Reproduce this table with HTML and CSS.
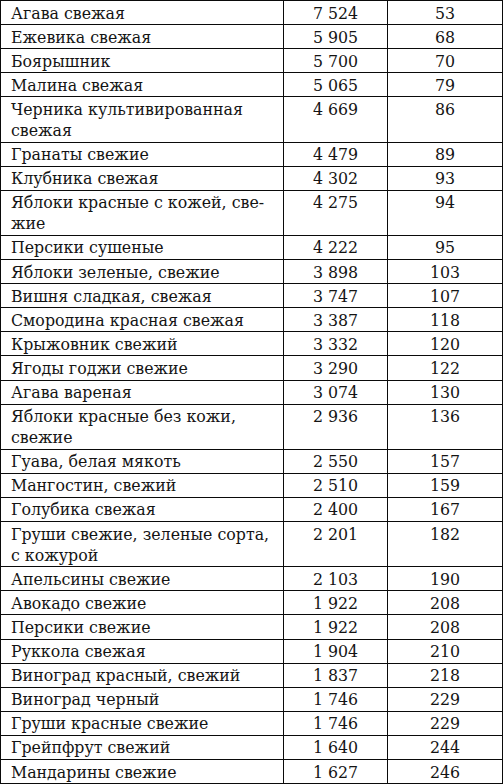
FILE: index.html
```html
<!DOCTYPE html>
<html lang="ru">
<head>
<meta charset="utf-8">
<link rel="stylesheet" href="styles.css">
</head>
<body>
<table class="tbl">
<colgroup><col class="c1"><col class="c2"><col class="c3"></colgroup>
<tbody>
<tr><td>Агава свежая</td><td>7 524</td><td>53</td></tr>
<tr><td>Ежевика свежая</td><td>5 905</td><td>68</td></tr>
<tr><td>Боярышник</td><td>5 700</td><td>70</td></tr>
<tr><td>Малина свежая</td><td>5 065</td><td>79</td></tr>
<tr><td>Черника культивированная<br>свежая</td><td>4 669</td><td>86</td></tr>
<tr><td>Гранаты свежие</td><td>4 479</td><td>89</td></tr>
<tr><td>Клубника свежая</td><td>4 302</td><td>93</td></tr>
<tr><td>Яблоки красные с кожей, све-<br>жие</td><td>4 275</td><td>94</td></tr>
<tr><td>Персики сушеные</td><td>4 222</td><td>95</td></tr>
<tr><td>Яблоки зеленые, свежие</td><td>3 898</td><td>103</td></tr>
<tr><td>Вишня сладкая, свежая</td><td>3 747</td><td>107</td></tr>
<tr><td>Смородина красная свежая</td><td>3 387</td><td>118</td></tr>
<tr><td>Крыжовник свежий</td><td>3 332</td><td>120</td></tr>
<tr><td>Ягоды годжи свежие</td><td>3 290</td><td>122</td></tr>
<tr><td>Агава вареная</td><td>3 074</td><td>130</td></tr>
<tr><td>Яблоки красные без кожи,<br>свежие</td><td>2 936</td><td>136</td></tr>
<tr><td>Гуава, белая мякоть</td><td>2 550</td><td>157</td></tr>
<tr><td>Мангостин, свежий</td><td>2 510</td><td>159</td></tr>
<tr><td>Голубика свежая</td><td>2 400</td><td>167</td></tr>
<tr><td>Груши свежие, зеленые сорта,<br>с кожурой</td><td>2 201</td><td>182</td></tr>
<tr><td>Апельсины свежие</td><td>2 103</td><td>190</td></tr>
<tr><td>Авокадо свежие</td><td>1 922</td><td>208</td></tr>
<tr><td>Персики свежие</td><td>1 922</td><td>208</td></tr>
<tr><td>Руккола свежая</td><td>1 904</td><td>210</td></tr>
<tr><td>Виноград красный, свежий</td><td>1 837</td><td>218</td></tr>
<tr><td>Виноград черный</td><td>1 746</td><td>229</td></tr>
<tr><td>Груши красные свежие</td><td>1 746</td><td>229</td></tr>
<tr><td>Грейпфрут свежий</td><td>1 640</td><td>244</td></tr>
<tr><td>Мандарины свежие</td><td>1 627</td><td>246</td></tr>
</tbody>
</table>
</body>
</html>
```

FILE: styles.css
```css
html, body {
  margin: 0;
  padding: 0;
  background: #ffffff;
}

.tbl {
  border-collapse: collapse;
  table-layout: fixed;
  width: 502px;
  font-family: "DejaVu Serif", "Liberation Serif", serif;
  font-size: 15.8px;
  line-height: 21.1px;
  color: #141414;
}

.c1 { width: 283px; }
.c2 { width: 104px; }
.c3 { width: 115px; }

.tbl td {
  border: 1px solid #0a0a0a;
  padding: 1.5px 4px 0.5px 10px;
  vertical-align: top;
  white-space: nowrap;
}

.tbl td + td {
  text-align: center;
  padding: 1.5px 2px 0.5px;
}
```
